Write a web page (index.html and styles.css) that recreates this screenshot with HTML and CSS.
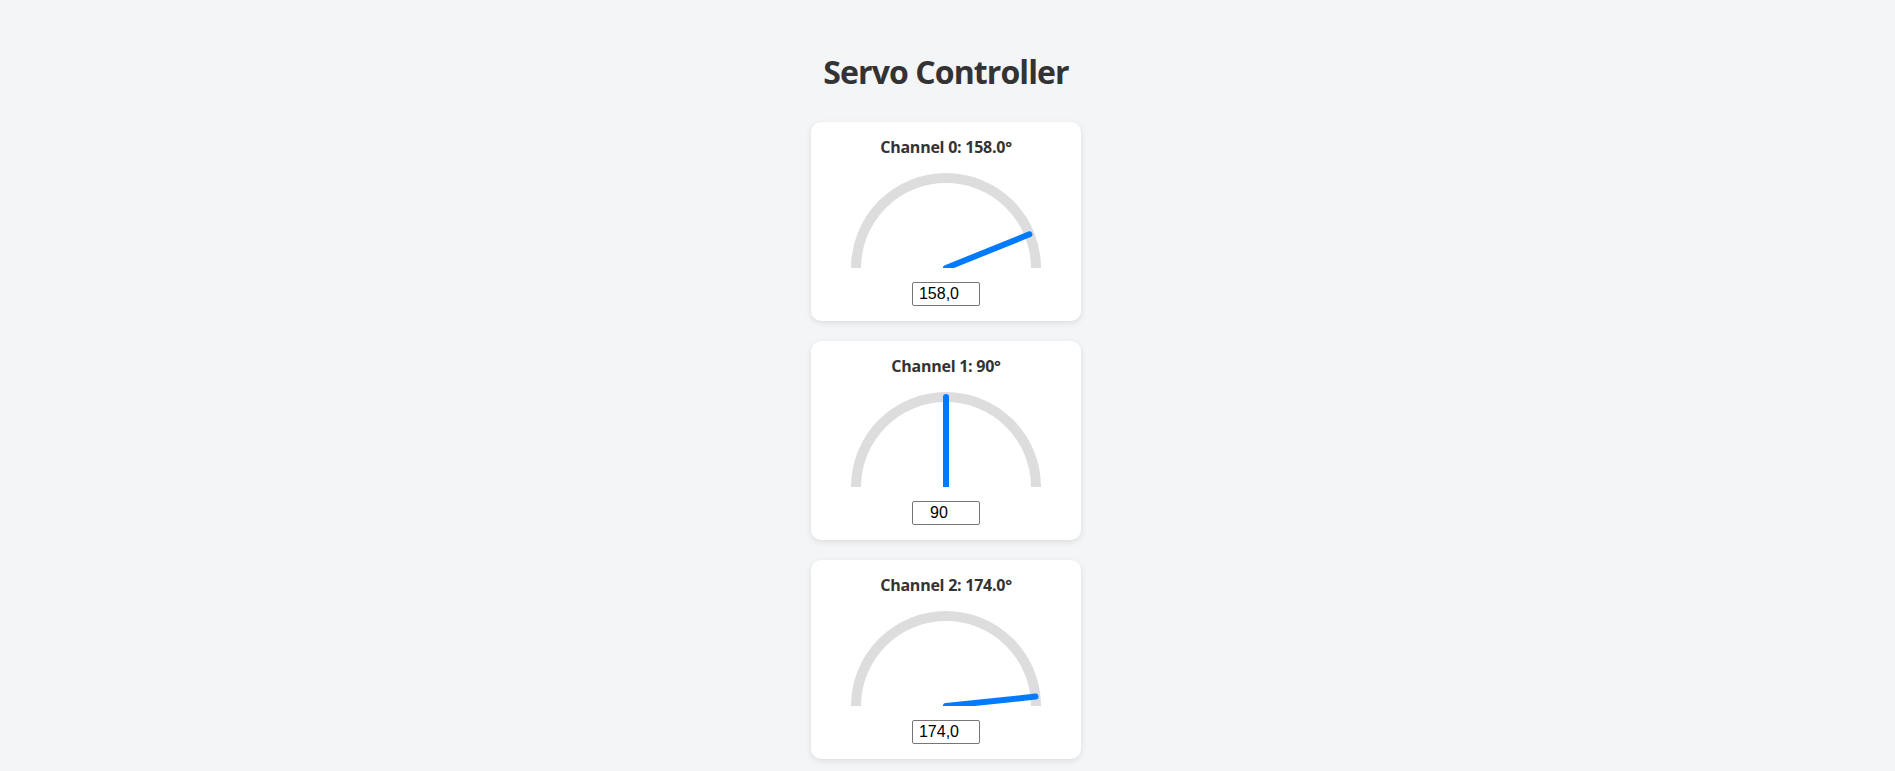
FILE: index.html
```html
<!DOCTYPE html>
<html lang="en">
<head>
<meta charset="utf-8">
<title>Servo Controller</title>
<link rel="stylesheet" href="styles.css">
</head>
<body>
<main class="page">
  <h1 class="title">Servo Controller</h1>
  <div class="channels">
    <section class="card">
      <h3 class="card-title">Channel 0: 158.0°</h3>
      <svg class="gauge" width="200" height="100" viewBox="0 0 200 100">
        <path d="M10,100 A90,90 0 0,1 190,100" class="arc"/>
        <line x1="100" y1="100" x2="183.4" y2="66.3" class="needle"/>
      </svg>
      <input class="angle-input" type="text" value="158,0">
    </section>
    <section class="card">
      <h3 class="card-title">Channel 1: 90°</h3>
      <svg class="gauge" width="200" height="100" viewBox="0 0 200 100">
        <path d="M10,100 A90,90 0 0,1 190,100" class="arc"/>
        <line x1="100" y1="100" x2="100" y2="10" class="needle"/>
      </svg>
      <input class="angle-input" type="text" value="90">
    </section>
    <section class="card">
      <h3 class="card-title">Channel 2: 174.0°</h3>
      <svg class="gauge" width="200" height="100" viewBox="0 0 200 100">
        <path d="M10,100 A90,90 0 0,1 190,100" class="arc"/>
        <line x1="100" y1="100" x2="189.5" y2="90.6" class="needle"/>
      </svg>
      <input class="angle-input" type="text" value="174,0">
    </section>
  </div>
</main>
</body>
</html>
```

FILE: styles.css
```css
html, body {
  margin: 0;
  padding: 0;
}
body {
  background: #f4f5f7;
  font-family: "Open Sans", "Noto Sans", sans-serif;
  color: #333;
}
.page {
  display: flex;
  flex-direction: column;
  align-items: center;
  padding: 51px 3px 20px 0;
}
.title {
  margin: 0 0 29px;
  font-size: 32px;
  font-weight: 700;
  line-height: 42px;
  letter-spacing: -0.9px;
  color: #333;
}
.channels {
  display: flex;
  flex-direction: column;
  gap: 20px;
}
.card {
  width: 270px;
  box-sizing: border-box;
  background: #fff;
  border-radius: 10px;
  box-shadow: 0 2px 6px rgba(0,0,0,0.1);
  padding: 15px;
  display: flex;
  flex-direction: column;
  align-items: center;
}
.card-title {
  margin: 0 0 10px;
  font-size: 16px;
  font-weight: 700;
  line-height: 21px;
  letter-spacing: -0.25px;
}
.gauge {
  display: block;
}
.arc {
  fill: none;
  stroke: #ddd;
  stroke-width: 10;
}
.needle {
  stroke: #007bff;
  stroke-width: 6;
  stroke-linecap: round;
}
.angle-input {
  margin-top: 14px;
  width: 68px;
  height: 24px;
  box-sizing: border-box;
  border: 1px solid #767676;
  border-radius: 2px;
  padding: 1px 17px 1px 3px;
  font-family: "Liberation Sans", Arial, sans-serif;
  font-size: 16px;
  text-align: center;
  color: #000;
  background: #fff;
}
```
